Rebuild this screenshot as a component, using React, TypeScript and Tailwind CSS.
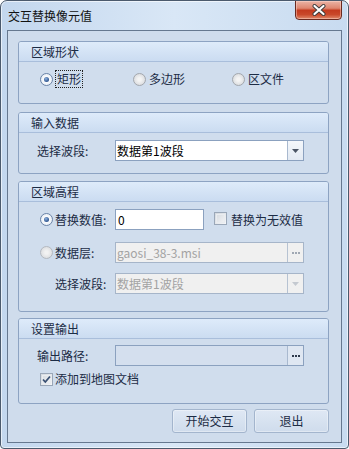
import React from "react";

const FONT = { fontFamily: '"Noto Sans CJK SC", "Noto Sans", sans-serif' };

function Radio({ checked, disabled }: { checked?: boolean; disabled?: boolean }) {
  return (
    <span
      className={
        "relative inline-flex w-[13px] h-[13px] shrink-0 rounded-full border items-center justify-center " +
        (checked
          ? "border-[#6b84a8] bg-[radial-gradient(circle,#ffffff_30%,#d9e2ee_100%)]"
          : disabled
          ? "border-[#b4b9c0] bg-[radial-gradient(circle,#f2f2f2_20%,#d2d5d9_100%)]"
          : "border-[#a3a7ad] bg-[radial-gradient(circle,#f4f4f4_20%,#cfd2d6_100%)]")
      }
    >
      {checked && (
        <span className="w-[5px] h-[5px] rounded-full bg-[radial-gradient(circle_at_40%_35%,#8fb2df_0%,#2d5590_70%,#1f3f70_100%)]" />
      )}
    </span>
  );
}

function Checkbox({ checked }: { checked?: boolean }) {
  return (
    <span className="relative inline-flex w-[13px] h-[13px] shrink-0 border border-[#9aa7b8] bg-gradient-to-br from-[#d3d8de] to-[#f5f6f8] items-center justify-center">
      <span className="absolute inset-[1px] border border-[#e9ecf0]" />
      {checked && (
        <svg width="11" height="11" viewBox="0 0 11 11" className="relative">
          <path d="M2 5.5 L4.3 8 L9 2.5" fill="none" stroke="#3a5073" strokeWidth="1.8" />
        </svg>
      )}
    </span>
  );
}

function Group({ title, h, children }: { title: string; h: string; children: React.ReactNode }) {
  return (
    <div className={"w-[311px] shrink-0 border border-[#8da3c2] rounded-[3px] bg-[#d0dded] flex flex-col overflow-hidden " + h}>
      <div className="h-[20px] shrink-0 border-b border-[#a9bedb] bg-gradient-to-b from-[#deebfa] to-[#cbdcf1] flex items-center pl-[12px] text-[12px] text-[#1c2c45] leading-[20px]">
        {title}
      </div>
      {children}
    </div>
  );
}

function Combo({ text, disabled, w = "w-[189px]" }: { text: string; disabled?: boolean; w?: string }) {
  return (
    <div
      className={
        "h-[21px] flex border " +
        w +
        (disabled ? " border-[#a6b5c9] bg-[#f0f0f0]" : " border-[#8ba1bf] bg-white")
      }
    >
      <div className={"flex-1 pl-[1px] text-[12px] leading-[19px] " + (disabled ? "text-[#a3a3a3]" : "text-black")}>
        {text}
      </div>
      <div className={"w-[16px] border-l flex items-center justify-center " + (disabled ? "border-[#b6c2d2] bg-[#f0f0f0]" : "border-[#a9b9cf] bg-gradient-to-b from-[#f4f7fb] to-[#e3eaf3]")}>
        <svg width="7" height="4" viewBox="0 0 7 4">
          <path d="M0 0 H7 L3.5 4 Z" fill={disabled ? "#c4c9d0" : "#4b5565"} />
        </svg>
      </div>
    </div>
  );
}

function Browse({ text, disabled, bg }: { text: string; disabled?: boolean; bg: string }) {
  return (
    <div className={"h-[21px] w-[189px] flex border " + (disabled ? "border-[#a6b5c9] " : "border-[#8ba1bf] ") + bg}>
      <div className={"flex-1 pl-[1px] text-[12px] leading-[19px] " + (disabled ? "text-[#a3a3a3]" : "text-black")}>{text}</div>
      <div className={"w-[16px] border-l flex items-center justify-center gap-[1px] " + (disabled ? "border-[#b6c2d2] bg-[#f0f0f0]" : "border-[#a9b9cf] bg-[#dfe7f2]")}>
        {[0, 1, 2].map((i) => (
          <span key={i} className={"w-[2px] h-[2px] " + (disabled ? "bg-[#a0a8b3]" : "bg-[#2e3a4c]")} />
        ))}
      </div>
    </div>
  );
}

export default function App() {
  return (
    <div style={FONT} className="w-[349px] h-[449px] bg-white">
      <div className="relative w-[349px] h-[449px] border border-[#4b5a6d] rounded-t-[7px] rounded-b-[4px] overflow-hidden flex flex-col bg-gradient-to-r from-[#c3d7ee] via-[#d9e7f6] to-[#c8dbf0] shadow-[inset_0_0_0_1px_rgba(255,255,255,0.6)]">
        <div className="h-[29px] shrink-0 flex items-center pl-[7px] text-[12px] text-[#111]">
          交互替换像元值
        </div>
        <div className="absolute top-[-1px] right-[6px] w-[47px] h-[20px] rounded-b-[4px] border border-[#6a2a20] bg-[linear-gradient(to_bottom,#eab4a6_0%,#de8670_40%,#c43b1f_52%,#c9482a_75%,#e0896a_100%)] shadow-[inset_0_0_0_1px_rgba(255,220,210,0.45)] flex items-center justify-center">
          <svg width="14" height="12" viewBox="0 0 14 12">
            <path d="M2.5 2 L11.5 10 M11.5 2 L2.5 10" stroke="#3b3b3b" strokeWidth="4" strokeLinecap="round" />
            <path d="M2.5 2 L11.5 10 M11.5 2 L2.5 10" stroke="#ffffff" strokeWidth="2.2" strokeLinecap="round" />
          </svg>
        </div>
        <div className="mx-[6px] mb-[5px] flex-1 border border-[#66788f] bg-[#cfdcec] pl-[10px] pt-[10px] flex flex-col">
          <Group title="区域形状" h="h-[63px]">
            <div className="pt-[7px] pl-[21px] flex items-center h-[27px] text-[12px] text-[#1c2c45]">
              <div className="w-[93px] flex items-center gap-[2px]">
                <Radio checked />
                <span className="border border-dotted border-[#222] px-[1px] leading-[16px]">矩形</span>
              </div>
              <div className="w-[99px] flex items-center gap-[3px]">
                <Radio />
                <span>多边形</span>
              </div>
              <div className="flex items-center gap-[3px]">
                <Radio />
                <span>区文件</span>
              </div>
            </div>
          </Group>
          <div className="h-[8px] shrink-0" />
          <Group title="输入数据" h="h-[62px]">
            <div className="pt-[7px] pl-[18px] flex items-center text-[12px] text-[#1c2c45]">
              <span className="w-[78px]">选择波段:</span>
              <Combo text="数据第1波段" />
            </div>
          </Group>
          <div className="h-[7px] shrink-0" />
          <Group title="区域高程" h="h-[131px]">
            <div className="pt-[7px] pl-[21px] flex items-center text-[12px] text-[#1c2c45]">
              <Radio checked />
              <span className="ml-[2px] w-[60px]">替换数值:</span>
              <div className="w-[89px] h-[21px] border border-[#8ba1bf] bg-white pl-[2px] text-[12px] leading-[19px] text-black">0</div>
              <span className="ml-[10px]"><Checkbox /></span>
              <span className="ml-[4px]">替换为无效值</span>
            </div>
            <div className="mt-[12px] pl-[21px] flex items-center text-[12px] text-[#1c2c45]">
              <Radio disabled />
              <span className="ml-[2px] w-[60px]">数据层:</span>
              <Browse text="gaosi_38-3.msi" disabled bg="bg-[#f0f0f0]" />
            </div>
            <div className="mt-[10px] pl-[36px] flex items-center text-[12px] text-[#1c2c45]">
              <span className="w-[60px]">选择波段:</span>
              <Combo text="数据第1波段" disabled />
            </div>
          </Group>
          <div className="h-[6px] shrink-0" />
          <Group title="设置输出" h="h-[86px]">
            <div className="pt-[6px] pl-[18px] flex items-center text-[12px] text-[#1c2c45]">
              <span className="w-[78px]">输出路径:</span>
              <Browse text="" bg="bg-[#d4dfee]" />
            </div>
            <div className="mt-[5px] pl-[21px] flex items-center h-[16px] text-[12px] text-[#1c2c45]">
              <Checkbox checked />
              <span className="ml-[2px]">添加到地图文档</span>
            </div>
          </Group>
          <div className="h-[5px] shrink-0" />
          <div className="w-[311px] flex justify-end gap-[7px]">
            {["开始交互", "退出"].map((t) => (
              <div
                key={t}
                className="w-[75px] h-[24px] rounded-[3px] border border-[#a3b5cd] bg-gradient-to-b from-[#dfe8f4] to-[#cfdcec] shadow-[inset_0_0_0_1px_rgba(255,255,255,0.35)] flex items-center justify-center text-[12px] text-[#1c2c45]"
              >
                {t}
              </div>
            ))}
          </div>
        </div>
      </div>
    </div>
  );
}
